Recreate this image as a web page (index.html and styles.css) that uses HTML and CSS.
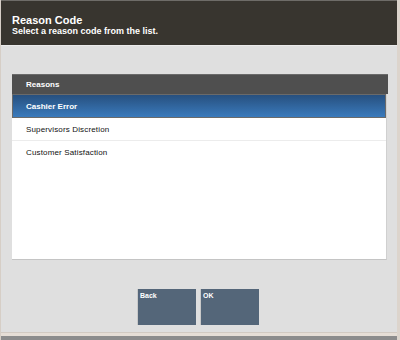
FILE: index.html
```html
<!DOCTYPE html>
<html>
<head>
<meta charset="utf-8">
<link rel="stylesheet" href="styles.css">
</head>
<body>
<div class="frame">
  <div class="header">
    <div class="title">Reason Code</div>
    <div class="subtitle">Select a reason code from the list.</div>
  </div>
  <div class="main">
    <div class="panel">
      <div class="panel-head">Reasons</div>
      <div class="list">
        <div class="row selected">Cashier Error</div>
        <div class="row">Supervisors Discretion</div>
        <div class="row">Customer Satisfaction</div>
      </div>
    </div>
    <div class="buttons">
      <div class="btn">Back</div>
      <div class="btn">OK</div>
    </div>
  </div>
  <div class="foot-light"></div>
  <div class="foot-dark"></div>
</div>
</body>
</html>
```
FILE: styles.css
```css
html, body {
  margin: 0;
  padding: 0;
}
body {
  width: 400px;
  height: 340px;
  overflow: hidden;
  font-family: "Liberation Sans", Arial, sans-serif;
}
.frame {
  width: 400px;
  height: 340px;
  display: flex;
  flex-direction: column;
  background: #dfdfdf;
  box-sizing: border-box;
  border-left: 1px solid #d6cec6;
  border-right: 3px solid #dcd4cc;
}
.header {
  background: #38352f;
  border-top: 1px solid #6e6c68;
  border-bottom: 1px solid #ebebeb;
  color: #fff;
  padding: 13px 0 0 11px;
  box-sizing: border-box;
  height: 46px;
}
.title {
  font-size: 11px;
  font-weight: bold;
  line-height: 12px;
}
.subtitle {
  font-size: 9px;
  font-weight: bold;
  line-height: 10px;
}
.main {
  flex: 1;
  padding: 28px 9px 0 11px;
  display: flex;
  flex-direction: column;
}
.panel {
  display: flex;
  flex-direction: column;
}
.panel-head {
  height: 20px;
  background: #4f4f4f;
  border-top: 1px solid #6a6a6a;
  box-sizing: border-box;
  color: #fff;
  font-size: 8px;
  font-weight: bold;
  line-height: 19px;
  padding-left: 14px;
}
.list {
  height: 166px;
  background: #fff;
  border-bottom: 1px solid #c4c4c4;
  border-right: 1px solid #d0d0d0;
  box-sizing: border-box;
  margin-right: 1px;
}
.row {
  height: 23px;
  box-sizing: border-box;
  border-bottom: 1px solid #ececec;
  font-size: 8px;
  line-height: 24px;
  padding-left: 14px;
  color: #111;
  letter-spacing: 0.15px;
}
.row:last-child {
  border-bottom: none;
}
.row.selected {
  height: 24px;
  background: linear-gradient(#27507f, #3a7abc);
  border: 1px solid #6a6a6a;
  color: #fff;
  font-weight: bold;
  line-height: 23px;
  padding-left: 13px;
  letter-spacing: 0;
}
.buttons {
  margin-top: 29px;
  display: flex;
  justify-content: center;
  gap: 4px;
  padding-right: 4px;
}
.btn {
  width: 59px;
  height: 36px;
  background: #546679;
  border-left: 1px solid #c9c9c9;
  box-sizing: border-box;
  color: #fff;
  font-size: 7px;
  font-weight: bold;
  padding: 3px 0 0 2px;
  line-height: 8px;
}
.foot-light {
  height: 3px;
  background: #e6ded6;
  border-top: 1px solid #d2cac2;
}
.foot-dark {
  height: 4px;
  background: #8c8c8c;
}
```
